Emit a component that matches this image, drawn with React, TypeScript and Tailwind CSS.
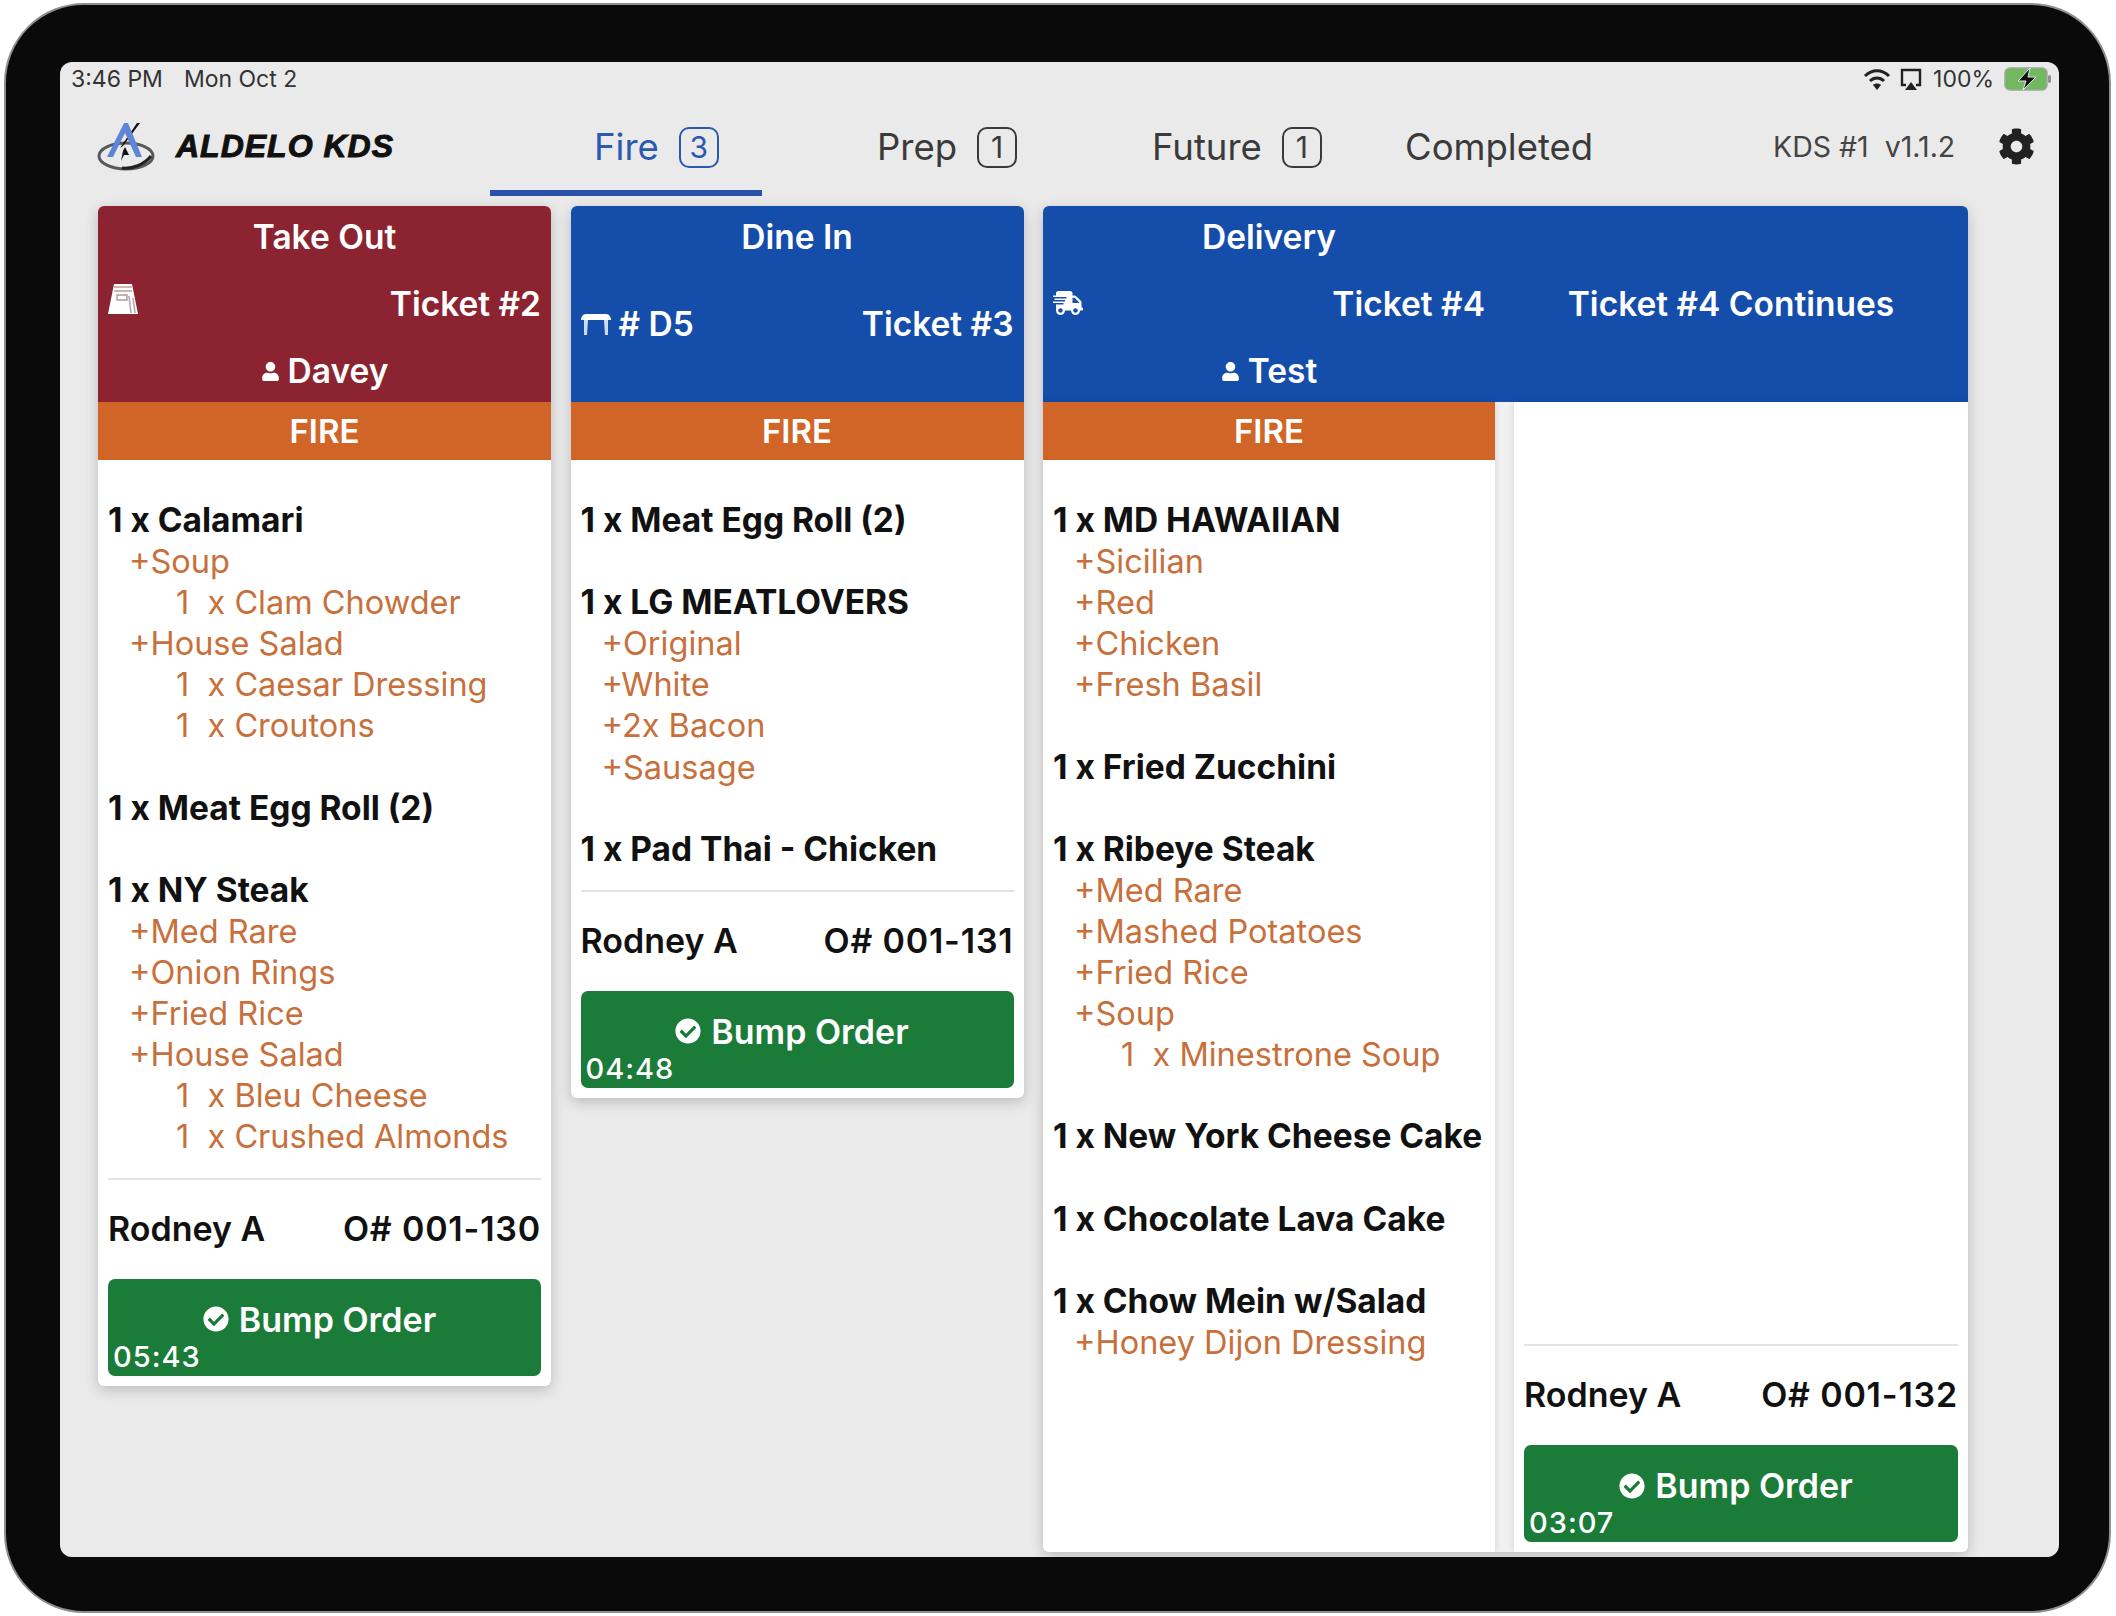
import { FaCheckCircle, FaCog, FaShippingFast, FaUser } from "react-icons/fa";

type Line = { t: string; k: "i" | "m" | "s" };

const i = (t: string): Line => ({ t, k: "i" });
const m = (t: string): Line => ({ t, k: "m" });
const s = (t: string): Line => ({ t, k: "s" });

const BagIcon = () => (
    <svg viewBox="0 0 30 30" className="w-[30px] h-[30px]">
        <path d="M6 0h18l6 30H0z" fill="#fff" />
        <path d="M6 3h18M6 7h18" stroke="#a56a70" strokeWidth="1.2" />
        <path d="M9 11h10v5H9z" stroke="#a99a9c" strokeWidth="1.4" fill="none" />
        <path d="M21 12l2 17M25 14l2 15" stroke="#b9a9ab" strokeWidth="1.6" fill="none" />
    </svg>
);

const TableIcon = () => (
    <svg viewBox="0 0 30 21" className="w-[30px] h-[21px]">
        <path d="M5 0h20c3 0 5 3 5 6H0c0-3 2-6 5-6z" fill="#fff" />
        <path d="M3 6h4l-1 15H3zM23 6h4v15h-3z" fill="#cfdcf0" />
    </svg>
);

const BumpButton = ({ time }: { time: string }) => (
    <div className="bg-[#1b7b39] rounded-[7px] h-[97px] pt-[20px] text-white">
        <div className="flex items-center justify-center gap-[10px] pr-[10px] text-[34px] leading-[41px] font-semibold">
            <FaCheckCircle className="text-[26px]" />
            <span>Bump Order</span>
        </div>
        <div className="pl-[5px] text-[29px] leading-[34px] tracking-[1px] font-medium">{time}</div>
    </div>
);

const Footer = ({ order, time }: { order: string; time: string }) => (
    <div className="px-[10px] pb-[10px]">
        <div className="border-t-2 border-[#e2e4e4] mt-[20px]" />
        <div className="flex justify-between mt-[28px] mb-[30px] text-[34px] leading-[41px] font-semibold text-[#111]">
            <span>Rodney A</span>
            <span className="tracking-[0.8px]">{order}</span>
        </div>
        <BumpButton time={time} />
    </div>
);

const Lines = ({ groups }: { groups: Line[][] }) => (
    <div className="px-[10px] pt-[40px] flex flex-col gap-[41.1px]">
        {groups.map((group, g) => (
            <div key={g}>
                {group.map((line, n) => (
                    <div
                        key={n}
                        className={
                            line.k === "i"
                                ? "text-[33.5px] leading-[41.1px] font-bold text-[#111] whitespace-pre"
                                : line.k === "m"
                                    ? "pl-[21px] text-[32.5px] leading-[41.1px] text-[#c8703c] whitespace-pre"
                                    : "pl-[68px] text-[32.5px] leading-[41.1px] text-[#c8703c] whitespace-pre"
                        }
                    >
                        {line.t}
                    </div>
                ))}
            </div>
        ))}
    </div>
);

const FireStrip = () => (
    <div className="bg-[#d16527] h-[58px] pt-[1px] flex items-center justify-center text-white text-[33px] font-semibold">FIRE</div>
);

const Name = ({ name }: { name: string }) => (
    <div className="flex items-center justify-center gap-[8px]">
        <FaUser className="text-[19px]" />
        <span>{name}</span>
    </div>
);

const Header = ({ title, children, className = "" }: { title: string; children: React.ReactNode; className?: string }) => (
    <div className={`flex-1 h-[196px] px-[10px] pt-[11px] pb-[9px] flex flex-col text-white text-[33.5px] leading-[41px] font-semibold ${className}`}>
        <div className="text-center">{title}</div>
        {children}
    </div>
);

const Tab = ({ label, badge, className }: { label: string; badge?: number; className: string }) => (
    <div className={`h-full shrink-0 flex items-center gap-[20px] text-[36.5px] ${className}`}>
        <span>{label}</span>
        {badge !== undefined && (
            <span className="w-[40px] h-[41px] border-2 border-current rounded-[10px] flex items-center justify-center text-[30px]">
                {badge}
            </span>
        )}
    </div>
);

const StatusBar = () => (
    <div className="h-[34px] flex items-center justify-between pl-[11px] pr-[7px] text-[23px] text-[#333]">
        <div className="flex gap-[21px]">
            <span>3:46 PM</span>
            <span>Mon Oct 2</span>
        </div>
        <div className="flex items-center">
            <svg viewBox="0 0 28 24" className="w-[28px] h-[24px]">
                <path d="M2 9c7-7 17-7 24 0" stroke="#222" strokeWidth="3" fill="none" />
                <path d="M7 14c4-4 10-4 14 0" stroke="#222" strokeWidth="3" fill="none" />
                <path d="M14 23l-4-5c2-2 6-2 8 0z" fill="#222" />
            </svg>
            <svg viewBox="0 0 24 24" className="w-[24px] h-[24px] ml-[8px]">
                <path d="M7 18H3V3h18v15h-4" stroke="#222" strokeWidth="2.4" fill="none" />
                <path d="M12 15l6 8H6z" fill="#222" />
            </svg>
            <span className="ml-[10px]">100%</span>
            <svg viewBox="0 0 48 24" className="w-[48px] h-[24px] ml-[10px]">
                <rect x="1" y="1" width="42" height="22" rx="5" fill="#72b85f" stroke="#9fa7a0" strokeWidth="1.5" />
                <rect x="44" y="8" width="3" height="8" rx="1.5" fill="#8a9a88" />
                <path d="M26 1L14 14h8l-3 9 13-13h-8z" fill="#111" stroke="#e8e8e8" strokeWidth="1" />
            </svg>
        </div>
    </div>
);

const Nav = () => (
    <div className="h-[100px] flex items-center">
        <div className="w-[430px] shrink-0 pl-[37px] flex items-center gap-[21px]">
            <svg viewBox="0 0 58 50" className="w-[58px] h-[50px] shrink-0">
                <ellipse cx="29" cy="35" rx="27" ry="13" fill="none" stroke="#55595c" strokeWidth="3" />
                <path d="M25 47c10 1 22-3 29-12" stroke="#222" strokeWidth="3" fill="none" />
                <path d="M29 23L46 0l-3 0-17 25z" fill="#111" transform="translate(-3 2)" />
                <path d="M10 36L27 2h4l14 34h-6L28 12 16 36z" fill="#5f86d6" />
                <path d="M28 26l4 8h-5l-3 6 2-10z" fill="#111" />
            </svg>
            <span className="font-['Liberation_Sans',sans-serif] font-bold italic text-[32px] tracking-[1px] text-[#111] [-webkit-text-stroke:1px_#111] whitespace-nowrap">
                ALDELO KDS
            </span>
        </div>
        <Tab label="Fire" badge={3} className="w-[272px] pl-[104px] pt-[8px] border-b-[6px] border-[#2b52a9] text-[#2b58b0]" />
        <Tab label="Prep" badge={1} className="w-[290px] pl-[115px] pt-[2px] text-[#3a3a3a]" />
        <Tab label="Future" badge={1} className="w-[353px] pl-[100px] pt-[2px] text-[#3a3a3a]" />
        <Tab label="Completed" className="w-[368px] pt-[2px] text-[#3a3a3a]" />
        <span className="w-[184px] shrink-0 pt-[2px] text-[28.5px] text-[#444] whitespace-pre">KDS #1  v1.1.2</span>
        <FaCog className="text-[37px] text-[#222] ml-[41px]" />
    </div>
);

const App = () => {
    return (
        <div className="w-[2116px] h-[1616px] bg-white pt-[3px] pl-[4px] pr-[5px] pb-[3px] font-['Inter',sans-serif]">
            <div className="h-full bg-[#0a0a0a] border-2 border-[#8f8f8f] rounded-[80px] pt-[57px] pl-[54px] pr-[50px] pb-[54px]">
                <div className="h-full bg-[#eaeaea] rounded-[12px] overflow-hidden">
                    <StatusBar />
                    <Nav />
                    <div className="flex items-start gap-[19.5px] mt-[10px] pl-[38px]">
                        <div className="w-[453px] bg-white rounded-[6px] shadow-[0_4px_14px_rgba(0,0,0,0.2)] overflow-hidden">
                            <div className="bg-[#8b2430] flex">
                                <Header title="Take Out">
                                    <div className="flex justify-between mt-[26px]">
                                        <BagIcon />
                                        <span>Ticket #2</span>
                                    </div>
                                    <div className="mt-[26px]"><Name name="Davey" /></div>
                                </Header>
                            </div>
                            <FireStrip />
                            <Lines
                                groups={[
                                    [i("1 x Calamari"), m("+Soup"), s("1  x Clam Chowder"), m("+House Salad"), s("1  x Caesar Dressing"), s("1  x Croutons")],
                                    [i("1 x Meat Egg Roll (2)")],
                                    [i("1 x NY Steak"), m("+Med Rare"), m("+Onion Rings"), m("+Fried Rice"), m("+House Salad"), s("1  x Bleu Cheese"), s("1  x Crushed Almonds")],
                                ]}
                            />
                            <Footer order="O# 001-130" time="05:43" />
                        </div>

                        <div className="w-[453px] bg-white rounded-[6px] shadow-[0_4px_14px_rgba(0,0,0,0.2)] overflow-hidden">
                            <div className="bg-[#154dab] flex">
                                <Header title="Dine In">
                                    <div className="flex justify-between items-center mt-[46px]">
                                        <div className="flex items-center gap-[8px]">
                                            <TableIcon />
                                            <span># D5</span>
                                        </div>
                                        <span>Ticket #3</span>
                                    </div>
                                </Header>
                            </div>
                            <FireStrip />
                            <Lines
                                groups={[
                                    [i("1 x Meat Egg Roll (2)")],
                                    [i("1 x LG MEATLOVERS"), m("+Original"), m("+White"), m("+2x Bacon"), m("+Sausage")],
                                    [i("1 x Pad Thai - Chicken")],
                                ]}
                            />
                            <Footer order="O# 001-131" time="04:48" />
                        </div>

                        <div className="w-[925px] h-[1346px] flex flex-col rounded-[6px] overflow-hidden shadow-[0_4px_14px_rgba(0,0,0,0.2)]">
                            <div className="bg-[#154dab] grid grid-cols-[452px_454px] gap-[19px]">
                                <Header title="Delivery">
                                    <div className="flex justify-between mt-[26px]">
                                        <FaShippingFast className="text-[30px] mt-[4px]" />
                                        <span>Ticket #4</span>
                                    </div>
                                    <div className="mt-[26px]"><Name name="Test" /></div>
                                </Header>
                                <div className="h-[196px] pt-[78px] pr-[20px] text-center text-white text-[33.5px] leading-[41px] font-semibold">
                                    Ticket #4 Continues
                                </div>
                            </div>
                            <div className="flex-1 grid grid-cols-[452px_454px] gap-[19px] bg-[#f1f1f1]">
                                <div className="bg-white shadow-[0_0_8px_rgba(0,0,0,0.12)]">
                                    <FireStrip />
                                    <Lines
                                        groups={[
                                            [i("1 x MD HAWAIIAN"), m("+Sicilian"), m("+Red"), m("+Chicken"), m("+Fresh Basil")],
                                            [i("1 x Fried Zucchini")],
                                            [i("1 x Ribeye Steak"), m("+Med Rare"), m("+Mashed Potatoes"), m("+Fried Rice"), m("+Soup"), s("1  x Minestrone Soup")],
                                            [i("1 x New York Cheese Cake")],
                                            [i("1 x Chocolate Lava Cake")],
                                            [i("1 x Chow Mein w/Salad"), m("+Honey Dijon Dressing")],
                                        ]}
                                    />
                                </div>
                                <div className="bg-white shadow-[0_0_8px_rgba(0,0,0,0.12)] flex flex-col justify-end">
                                    <Footer order="O# 001-132" time="03:07" />
                                </div>
                            </div>
                        </div>
                    </div>
                </div>
            </div>
        </div>
    );
};

export default App;
